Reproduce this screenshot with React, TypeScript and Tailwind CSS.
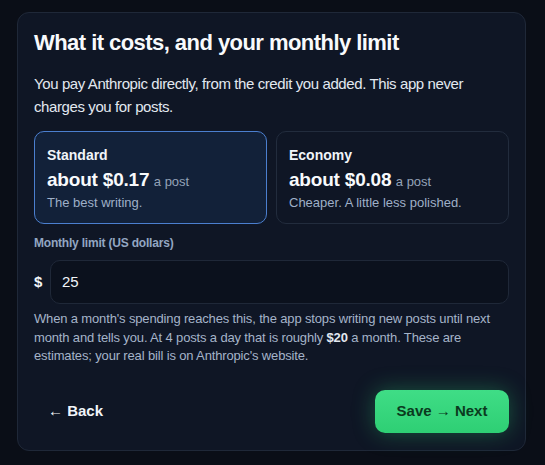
import React from "react";

export default function App() {
  return (
    <div
      className="min-h-[465px] w-full bg-[#0a0e17] pl-[17px] pr-[19px] pt-[12px] pb-[16px]"
      style={{ fontFamily: '"Liberation Sans", Arial, sans-serif' }}
    >
      <div className="rounded-[12px] border border-[#1f2838] bg-[#0f1625] px-4 pt-[17px] pb-[17px]">
        <h1 className="text-[22px] font-bold leading-[26px] tracking-[-0.55px] text-[#f8fafc]">
          What it costs, and your monthly limit
        </h1>
        <p className="mt-[16px] text-[15px] leading-[23px] tracking-[-0.4px] text-[#e2e8f0]">
          You pay Anthropic directly, from the credit you added. This app never charges you for posts.
        </p>

        <div className="mt-[13px] grid grid-cols-2 gap-[9px]">
          <div className="h-[93px] rounded-[10px] border border-[#4b7fcf] bg-[#122139] px-[12px] pt-[14px]">
            <div className="text-[14px] font-bold leading-[18px] text-[#f1f5f9]">Standard</div>
            <div className="mt-[5px] leading-[22px] text-[#f8fafc]">
              <span className="text-[19px] font-bold tracking-[-0.2px]">about $0.17</span>{" "}
              <span className="text-[13px] text-[#94a3b8]">a post</span>
            </div>
            <div className="mt-[1px] text-[13px] leading-[18px] text-[#9fb0c8]">The best writing.</div>
          </div>
          <div className="h-[93px] rounded-[10px] border border-[#222c3d] bg-[#0f1625] px-[12px] pt-[14px]">
            <div className="text-[14px] font-bold leading-[18px] text-[#f1f5f9]">Economy</div>
            <div className="mt-[5px] leading-[22px] text-[#f8fafc]">
              <span className="text-[19px] font-bold tracking-[-0.2px]">about $0.08</span>{" "}
              <span className="text-[13px] text-[#94a3b8]">a post</span>
            </div>
            <div className="mt-[1px] text-[13px] leading-[18px] text-[#9fb0c8]">Cheaper. A little less polished.</div>
          </div>
        </div>

        <div className="mt-[11px] text-[12px] font-bold leading-[16px] tracking-[-0.2px] text-[#93a6c2]">Monthly limit (US dollars)</div>

        <div className="mt-[9px] flex items-center gap-[8px]">
          <span className="w-[8px] text-[15px] font-bold text-[#f1f5f9]">$</span>
          <div className="flex h-[44px] flex-1 items-center rounded-[10px] border border-[#1f2838] bg-[#0b111d] px-[11px] text-[15px] text-[#f1f5f9]">
            25
          </div>
        </div>

        <p className="mt-[6px] text-[13px] leading-[18.5px] tracking-[-0.15px] text-[#a5b4c9]">
          When a month's spending reaches this, the app stops writing new posts until next month and tells you. At 4 posts a day that is roughly{" "}
          <span className="font-bold text-[#e2e8f0]">$20</span> a month. These are estimates; your real bill is on Anthropic's website.
        </p>

        <div className="mt-[24px] flex items-center justify-between">
          <button className="px-[14px] text-[15px] font-bold text-[#f1f5f9]">← Back</button>
          <button className="h-[43px] w-[134px] rounded-[10px] bg-gradient-to-b from-[#3fdd86] to-[#2ecf74] text-[15px] font-bold text-[#0b3a1e] shadow-[0_0_22px_rgba(46,207,116,0.35)]">
            Save → Next
          </button>
        </div>
      </div>
    </div>
  );
}
